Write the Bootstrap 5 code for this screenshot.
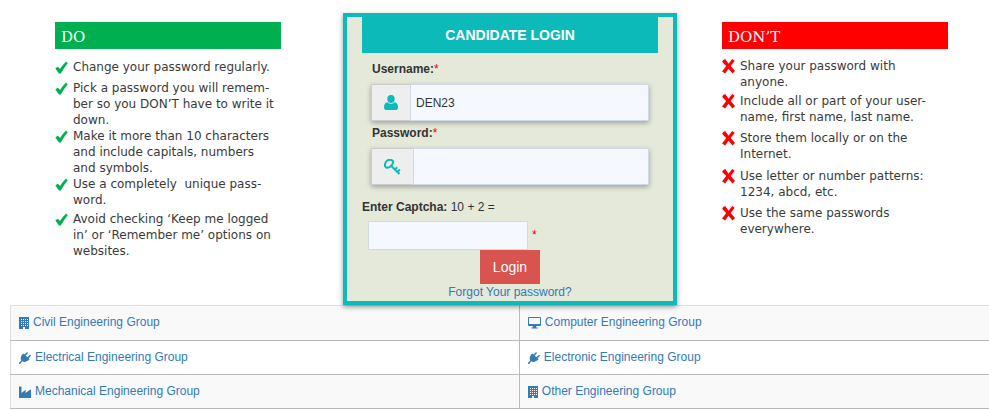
<!DOCTYPE html>
<html lang="en">
<head>
<meta charset="utf-8">
<meta name="viewport" content="width=device-width, initial-scale=1">
<title>Candidate Login</title>
<link rel="stylesheet" href="https://cdn.jsdelivr.net/npm/bootstrap@5.3.0/dist/css/bootstrap.min.css">
<style>
body{font:12px/17px "Liberation Sans",Arial,sans-serif;color:#333;background:#fff;overflow-x:hidden}
a{color:#337ab7;text-decoration:none}
.top-area{display:grid;grid-template-columns:333fr 334fr 312fr;padding:13px 0 0 10px}
.tips{font:12px/16px "DejaVu Sans",Verdana,sans-serif;color:#3a3a3a;padding:9px 40px 0 45px}
.tips h2{font:15px/24px "DejaVu Serif",Georgia,serif;color:#fff;padding:3px 0 0 6px;margin:0 22px 10px 0}
.tips-do h2{background:#00b050}
.tips-dont h2{background:#f00;margin:0 1px 9px 0}
.tips li{display:flex;gap:5px;margin-bottom:5px;white-space:nowrap}
.tips li.tight{margin-bottom:0}
.tips li.wide{margin-bottom:3px}
.tips-dont li.mid{margin-bottom:6px}
.tips svg{width:13px;height:16px;flex:none}
.login-box{background:#e4e9da;border:4px solid #0dbaba;box-shadow:0 2px 5px rgba(0,0,0,.4);padding:0 15px;position:relative;z-index:1}
.login-box h1{font-size:14px;line-height:36px;font-weight:700;color:#fff;background:#0dbaba;margin:0 0 8px}
.fields{padding:0 9px}
.login-box label{font-weight:700;display:block}
.fields label{padding-left:1px}
.fields label+.input-group{margin:6px 0 4px}
.req{color:#f00;font-weight:400}
.login-box .input-group{box-shadow:0 2px 5px rgba(0,0,0,.3);height:37px}
.login-box .input-group-text{background:#eee;border:1px solid #ccc;border-radius:0;padding:0 12px;color:#0dbaba}
.login-box .form-control{background:#f5f9ff;border:1px solid #d0d9e6;border-radius:0;font-size:12px;padding:0 5px;color:#333}
.captcha-text{padding-top:10px}
.captcha-row{padding:5px 0 0 6px}
.login-box .captcha-input{width:160px;height:29px}
.login-btn{background:#d9534f;color:#fff;font-size:14px;line-height:20px;border:0;border-radius:0;padding:7px 12px;width:60px}
.login-btn:hover{background:#c9302c;color:#fff}
.group-wrap{padding-left:10px}
.groups{margin:0;border-collapse:collapse;border-left:1px solid #ddd}
.groups td{border:0;border-top:1px solid #bbb;padding:8px;height:34px;font-size:12px;line-height:17px;box-shadow:none}
.groups tr:first-child td{border-top-color:#ddd;height:35px}
.groups tr:last-child td{border-bottom:1px solid #bbb}
.groups tr:nth-child(odd) td{background:#f9f9f9}
.groups td:first-child{width:52%;border-right:1px solid #bbb}
.groups a{display:flex;align-items:center;gap:4px}
.groups svg{fill:#337ab7;flex:none}
</style>
</head>
<body>
<svg class="d-none" aria-hidden="true">
  <symbol id="check" viewBox="0 0 13 16"><path d="M.3 9.200 3 7.800l2 2.200Q7.500 6 11.200 2.600l1.500 1.600Q9 8.800 5.800 14.500L3.900 14.400Z" fill="#00b050"/></symbol>
  <symbol id="cross" viewBox="0 0 13 16"><path d="M1 2.200 3.300 1Q4.800 3.500 6.600 5.700L10.200 1.100l2.500 1.700L8.700 8l4.300 5.100-2.500 2.400-4-4.800-3.300 4.800L.1 13.500 4.200 8.100.2 3.900Z" fill="#f00"/></symbol>
  <symbol id="building" viewBox="0 0 10 12"><path fill-rule="evenodd" d="M0 0h10v12H6V10H4v2H0ZM2 2v1h1V2Zm2 0v1h1V2Zm2 0v1h1V2Zm2 0v1h1V2ZM2 4v1h1V4Zm2 0v1h1V4Zm2 0v1h1V4Zm2 0v1h1V4ZM2 6v1h1V6Zm2 0v1h1V6Zm2 0v1h1V6Zm2 0v1h1V6ZM2 8v1h1V8Zm2 0v1h1V8Zm2 0v1h1V8Zm2 0v1h1V8Z"/></symbol>
  <symbol id="plug" viewBox="0 0 12 12"><path d="M11.700 3.200c.3.400.3.800-.1 1.100L9.600 6.200l1 1-.9.900c-1.900 1.900-4.800 2.300-6.500 1.100L1.200 12H0v-1.200l2.300-2.300C1.200 6.800 1.600 4.200 3.500 2.300l.9-.9 1.100 1L7.600.4c.8-.7 1.800.4 1.100 1.100L6.700 3.600l1.700 1.700 2.100-2.100c.4-.4.900-.4 1.200 0Z"/></symbol>
  <symbol id="industry" viewBox="0 0 12 12"><path d="M0 .5h2.500V7L6.600 3.800V7l4.300-3.200H12V12H0Z"/></symbol>
  <symbol id="monitor" viewBox="0 0 13 12"><path fill-rule="evenodd" d="M1 0h11q1 0 1 1V8q0 1-1 1H8.200v1.500h1.300v1H3.500v-1h1.300V9H1Q0 9 0 8V1q0-1 1-1Zm0 1v6h11V1Z"/></symbol>
</svg>

<main>
  <div class="top-area">
    <section class="tips tips-do">
      <h2>DO</h2>
      <ul class="list-unstyled mb-0">
        <li><svg><use href="#check"/></svg><span>Change your password regularly.</span></li>
        <li class="tight"><svg><use href="#check"/></svg><span>Pick a password you will remem-<br>ber so you DON’T have to write it<br>down.</span></li>
        <li class="tight"><svg><use href="#check"/></svg><span>Make it more than 10 characters<br>and include capitals, numbers<br>and symbols.</span></li>
        <li class="wide"><svg><use href="#check"/></svg><span>Use a completely&nbsp; unique pass-<br>word.</span></li>
        <li><svg><use href="#check"/></svg><span>Avoid checking ‘Keep me logged<br>in’ or ‘Remember me’ options on<br>websites.</span></li>
      </ul>
    </section>

    <form class="login-box" onsubmit="return false">
      <h1 class="text-center">CANDIDATE LOGIN</h1>
      <div class="fields">
        <label for="username">Username:<span class="req">*</span></label>
        <div class="input-group flex-nowrap">
          <span class="input-group-text"><svg width="14" height="15" viewBox="0 0 14 15" fill="#0dbaba" aria-hidden="true"><ellipse cx="7" cy="4" rx="3.700" ry="4"/><path d="M3.300 7.200Q7 10.300 10.700 7.200 13.900 7.600 14 12.200 13.900 15 11.600 15H2.400Q.1 15 0 12.200.1 7.600 3.300 7.200Z"/></svg></span>
          <input class="form-control" id="username" type="text" value="DEN23">
        </div>
        <label for="password">Password:<span class="req">*</span></label>
        <div class="input-group flex-nowrap">
          <span class="input-group-text"><svg width="17" height="16" viewBox="0 0 17 16" fill="none" stroke="#0dbaba" stroke-width="2" aria-hidden="true"><path d="M3.800 1.200Q6.500.2 8.600 1.700q1.300 1.400-.6 4.100Q5.500 9.100 2.500 8.800.2 7.700 1.200 4.500 2 2 3.800 1.200ZM6.500 6.200l9 8.800M11 10.500l2.200-2.200M13.500 12.800l2.400-2.300"/></svg></span>
          <input class="form-control" id="password" type="password">
        </div>
      </div>
      <div class="captcha-text"><label class="d-inline" for="captcha">Enter Captcha:</label> 10 + 2 =</div>
      <div class="captcha-row d-flex align-items-center gap-1"><input class="form-control captcha-input" id="captcha" type="text"><span class="req">*</span></div>
      <div class="text-center">
        <button class="btn login-btn d-block mx-auto" type="submit">Login</button>
        <a class="d-block" href="#">Forgot Your password?</a>
      </div>
    </form>

    <section class="tips tips-dont">
      <h2>DON’T</h2>
      <ul class="list-unstyled mb-0">
        <li class="wide"><svg><use href="#cross"/></svg><span>Share your password with<br>anyone.</span></li>
        <li><svg><use href="#cross"/></svg><span>Include all or part of your user-<br>name, first name, last name.</span></li>
        <li class="mid"><svg><use href="#cross"/></svg><span>Store them locally or on the<br>Internet.</span></li>
        <li><svg><use href="#cross"/></svg><span>Use letter or number patterns:<br>1234, abcd, etc.</span></li>
        <li><svg><use href="#cross"/></svg><span>Use the same passwords<br>everywhere.</span></li>
      </ul>
    </section>
  </div>

  <div class="group-wrap">
    <table class="table groups">
      <tbody>
        <tr>
          <td><a href="#"><svg width="10" height="12"><use href="#building"/></svg>Civil Engineering Group</a></td>
          <td><a href="#"><svg width="13" height="12"><use href="#monitor"/></svg>Computer Engineering Group</a></td>
        </tr>
        <tr>
          <td><a href="#"><svg width="12" height="12"><use href="#plug"/></svg>Electrical Engineering Group</a></td>
          <td><a href="#"><svg width="12" height="12"><use href="#plug"/></svg>Electronic Engineering Group</a></td>
        </tr>
        <tr>
          <td><a href="#"><svg width="12" height="12"><use href="#industry"/></svg>Mechanical Engineering Group</a></td>
          <td><a href="#"><svg width="10" height="12"><use href="#building"/></svg>Other Engineering Group</a></td>
        </tr>
      </tbody>
    </table>
  </div>
</main>
<script src="https://cdn.jsdelivr.net/npm/bootstrap@5.3.0/dist/js/bootstrap.bundle.min.js"></script>
</body>
</html>
